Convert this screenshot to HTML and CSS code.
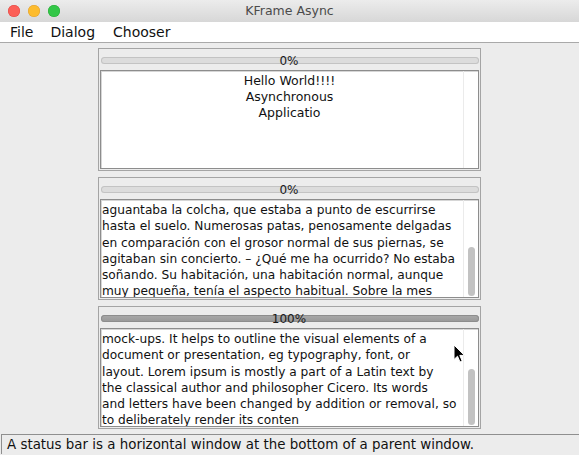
FILE: index.html
```html
<!DOCTYPE html>
<html>
<head>
<meta charset="utf-8">
<title>KFrame Async</title>
<link rel="stylesheet" href="styles.css">
</head>
<body>
<div class="window">
  <header class="titlebar">
    <div class="lights">
      <span class="light red"></span>
      <span class="light yellow"></span>
      <span class="light green"></span>
    </div>
    <div class="title">KFrame Async</div>
  </header>
  <nav class="menubar">
    <span class="menu">File</span>
    <span class="menu">Dialog</span>
    <span class="menu">Chooser</span>
  </nav>
  <main class="content">
    <section class="panel">
      <div class="progress">
        <div class="track"></div>
        <span class="pct">0%</span>
      </div>
      <div class="textarea">
        <div class="text centered">
          <div class="line">Hello World!!!!</div>
          <div class="line">Asynchronous</div>
          <div class="line">Applicatio</div>
        </div>
        <div class="scrollbar"></div>
      </div>
    </section>
    <section class="panel">
      <div class="progress">
        <div class="track"></div>
        <span class="pct">0%</span>
      </div>
      <div class="textarea">
        <div class="text lowered">
          <div class="line">aguantaba la colcha, que estaba a punto de escurrirse</div>
          <div class="line">hasta el suelo. Numerosas patas, penosamente delgadas</div>
          <div class="line">en comparación con el grosor normal de sus piernas, se</div>
          <div class="line">agitaban sin concierto. – ¿Qué me ha ocurrido? No estaba</div>
          <div class="line">soñando. Su habitación, una habitación normal, aunque</div>
          <div class="line">muy pequeña, tenía el aspecto habitual. Sobre la mes</div>
        </div>
        <div class="scrollbar"><div class="thumb thumb-a"></div></div>
      </div>
    </section>
    <section class="panel">
      <div class="progress">
        <div class="track full"></div>
        <span class="pct">100%</span>
      </div>
      <div class="textarea">
        <div class="text shifted">
          <div class="line">mock-ups. It helps to outline the visual elements of a</div>
          <div class="line">document or presentation, eg typography, font, or</div>
          <div class="line">layout. Lorem ipsum is mostly a part of a Latin text by</div>
          <div class="line">the classical author and philosopher Cicero. Its words</div>
          <div class="line">and letters have been changed by addition or removal, so</div>
          <div class="line">to deliberately render its conten</div>
        </div>
        <div class="scrollbar"><div class="thumb thumb-b"></div></div>
      </div>
    </section>
  </main>
  <footer class="status">A status bar is a horizontal window at the bottom of a parent window.</footer>
  <svg class="cursor" width="13" height="20" viewBox="0 0 13 20">
    <path d="M1 1 L1 15.5 L4.5 12.2 L7 18 L9.2 17 L6.8 11.4 L11.5 11.4 Z" fill="#000" stroke="#fff" stroke-width="1" stroke-linejoin="round"/>
  </svg>
</div>
</body>
</html>
```

FILE: styles.css
```css
* { box-sizing: border-box; }

html, body {
  margin: 0;
  padding: 0;
  background: #ececec;
}

.window {
  position: relative;
  width: 579px;
  height: 455px;
  display: flex;
  flex-direction: column;
  overflow: hidden;
  font-family: "DejaVu Sans", "Liberation Sans", sans-serif;
  color: #111;
}

/* Title bar */
.titlebar {
  height: 22px;
  flex: none;
  display: flex;
  align-items: center;
  position: relative;
  background: linear-gradient(#ececec, #d7d7d7);
}

.lights {
  display: flex;
  gap: 8px;
  padding-left: 8px;
}

.light {
  width: 12px;
  height: 12px;
  border-radius: 50%;
  display: block;
}

.red { background: #fc5f57; box-shadow: inset 0 0 0 0.5px #df4744; }
.yellow { background: #fdbc2e; box-shadow: inset 0 0 0 0.5px #de9f34; }
.green { background: #33c748; box-shadow: inset 0 0 0 0.5px #27aa35; }

.title {
  flex: 1;
  text-align: center;
  font-size: 12.5px;
  color: #4b4b4b;
  margin-left: -60px;
  line-height: 22px;
}

/* Menu bar */
.menubar {
  height: 21px;
  flex: none;
  background: #fff;
  border-bottom: 1px solid #a9a9a9;
  display: flex;
  align-items: center;
  gap: 17px;
  padding-left: 10px;
  font-size: 14px;
  color: #111;
}

.menu:last-child {
  margin-left: 1px;
}

/* Content */
.content {
  flex: 1;
  display: flex;
  flex-direction: column;
  align-items: center;
  gap: 6px;
  padding-top: 5px;
}

.panel {
  width: 383px;
  height: 123px;
  border: 1px solid #a4a4a4;
  padding: 0 1px 1px 1px;
  display: flex;
  flex-direction: column;
  background: #ececec;
}

.progress {
  height: 21px;
  flex: none;
  display: grid;
  align-items: center;
  padding: 2px 0 0 1px;
}

.track, .pct {
  grid-area: 1 / 1;
}

.track {
  height: 7px;
  border-radius: 4px;
  background: #dcdcdc;
  box-shadow: inset 0 0 0 1px #c3c3c3;
}

.track.full {
  background: linear-gradient(#a9a9a9, #989898);
  box-shadow: inset 0 0 0 1px #8d8d8d;
}

.pct {
  justify-self: center;
  font-size: 12px;
  line-height: 14px;
  color: #1a1a1a;
  margin-left: -2px;
}

.textarea {
  flex: 1;
  display: flex;
  background: #fff;
  border: 1px solid #8d8d8d;
  box-shadow: inset 1px 1px 0 #d6d6d6;
  overflow: hidden;
}

.text {
  flex: 1;
  min-width: 0;
  font-size: 12.2px;
  line-height: 16.3px;
  padding: 0 0 0 1px;
  color: #111;
}

.text.centered {
  text-align: center;
  padding-left: 15px;
  padding-top: 2px;
  font-size: 12.5px;
  line-height: 16px;
}

.text.lowered {
  padding-top: 2px;
}

.text.shifted {
  padding-top: 2px;
}

.line {
  white-space: nowrap;
  overflow: hidden;
}

.scrollbar {
  width: 15px;
  flex: none;
  border-left: 1px solid #ebebeb;
  display: flex;
  flex-direction: column;
  align-items: center;
}

.thumb {
  width: 7px;
  border-radius: 4px;
  background: #c2c2c2;
}

.thumb-a {
  margin-top: 47px;
  height: 49px;
}

.thumb-b {
  margin-top: 40px;
  height: 56px;
}

/* Status bar */
.status {
  flex: none;
  height: 20px;
  margin: 0 0 1px 1px;
  border-top: 1px solid #8f8f8f;
  border-left: 1px solid #8f8f8f;
  padding-left: 5px;
  font-size: 13.4px;
  line-height: 19px;
  color: #111;
  white-space: nowrap;
  background: #ececec;
}

/* Mouse pointer over the content */
.cursor {
  position: absolute;
  left: 453px;
  top: 344px;
}
```
